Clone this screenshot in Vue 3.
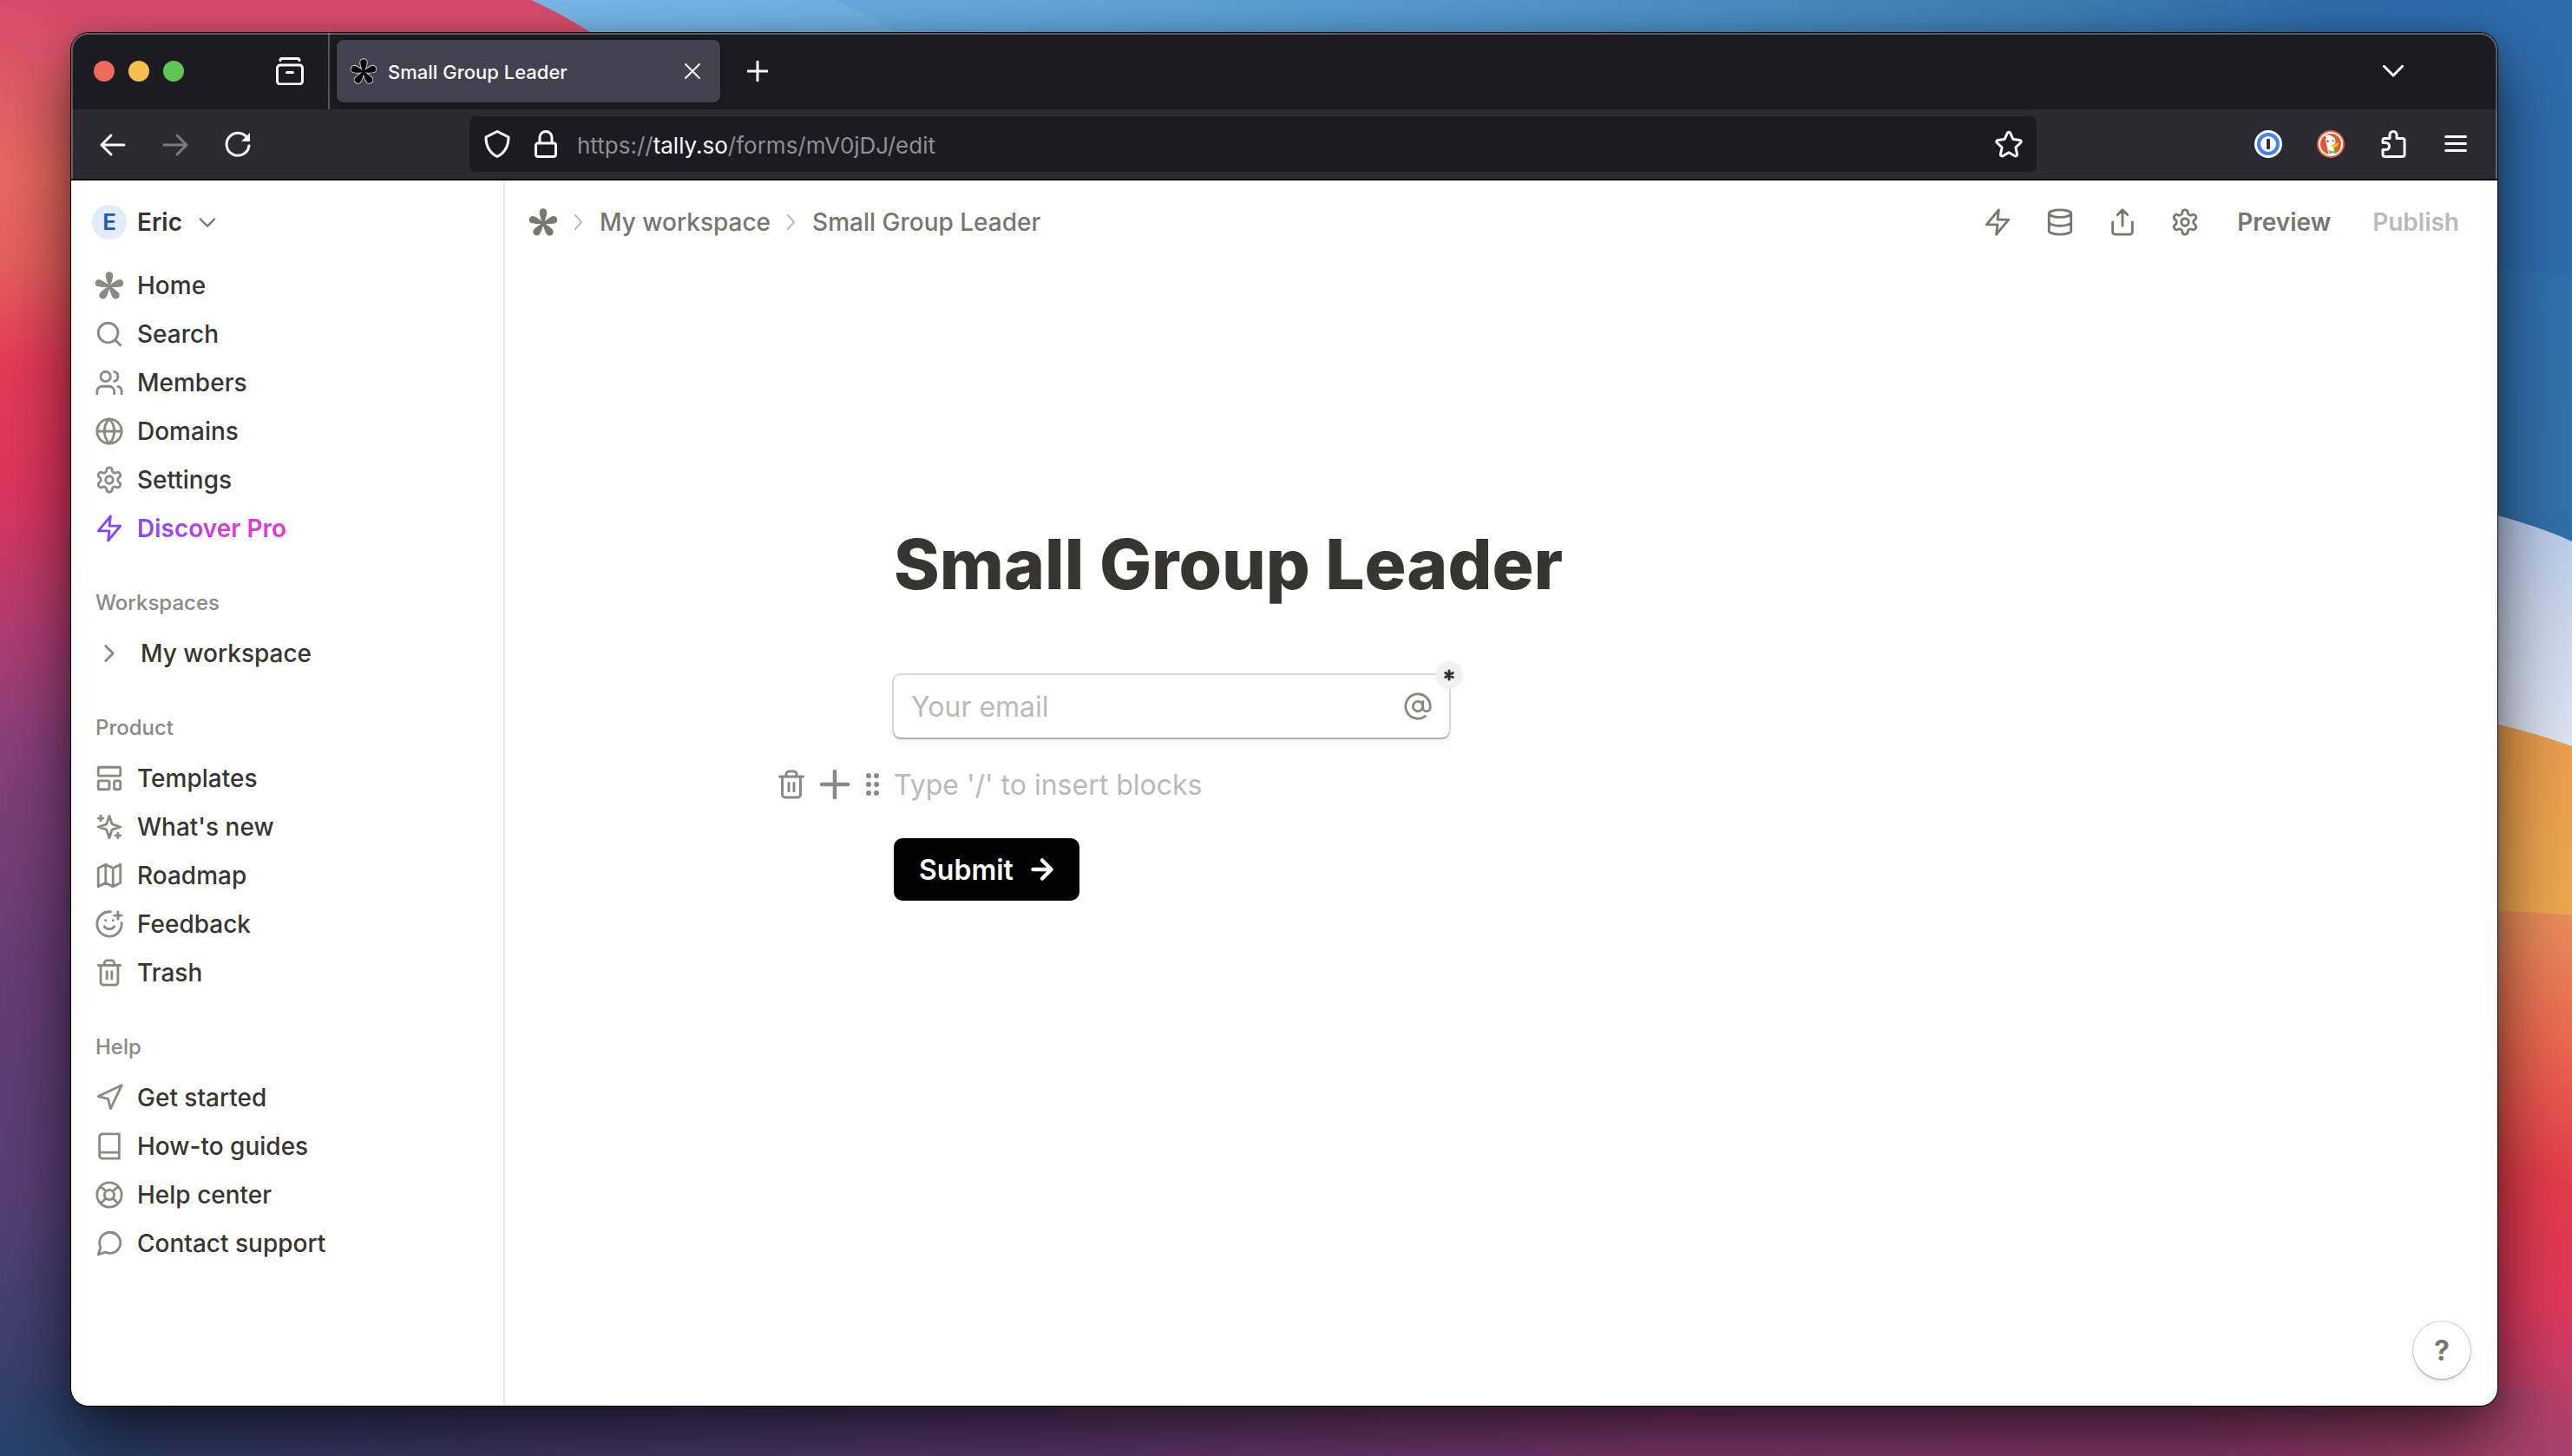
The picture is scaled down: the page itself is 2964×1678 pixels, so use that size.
<script setup>
import { ref } from 'vue'

const icons = {
  search: 'M19 11a8 8 0 1 1-16 0 8 8 0 0 1 16 0ZM21 21l-4.3-4.3',
  members: 'M16 21v-2a4 4 0 0 0-4-4H6a4 4 0 0 0-4 4v2M13 7a4 4 0 1 1-8 0 4 4 0 0 1 8 0ZM22 21v-2a4 4 0 0 0-3-3.87M16 3.13a4 4 0 0 1 0 7.75',
  globe: 'M22 12a10 10 0 1 1-20 0 10 10 0 0 1 20 0ZM12 2a14.5 14.5 0 0 0 0 20 14.5 14.5 0 0 0 0-20M2 12h20',
  settings: 'M12.22 2h-.44a2 2 0 0 0-2 2v.18a2 2 0 0 1-1 1.73l-.43.25a2 2 0 0 1-2 0l-.15-.08a2 2 0 0 0-2.73.73l-.22.38a2 2 0 0 0 .73 2.73l.15.1a2 2 0 0 1 1 1.72v.51a2 2 0 0 1-1 1.74l-.15.09a2 2 0 0 0-.73 2.73l.22.38a2 2 0 0 0 2.73.73l.15-.08a2 2 0 0 1 2 0l.43.25a2 2 0 0 1 1 1.73V20a2 2 0 0 0 2 2h.44a2 2 0 0 0 2-2v-.18a2 2 0 0 1 1-1.73l.43-.25a2 2 0 0 1 2 0l.15.08a2 2 0 0 0 2.73-.73l.22-.39a2 2 0 0 0-.73-2.73l-.15-.08a2 2 0 0 1-1-1.74v-.5a2 2 0 0 1 1-1.74l.15-.09a2 2 0 0 0 .73-2.73l-.22-.38a2 2 0 0 0-2.73-.73l-.15.08a2 2 0 0 1-2 0l-.43-.25a2 2 0 0 1-1-1.73V4a2 2 0 0 0-2-2ZM15 12a3 3 0 1 1-6 0 3 3 0 0 1 6 0Z',
  bolt: 'M13 2 3 14h9l-1 8 10-12h-9l1-8Z',
  right: 'M9 18l6-6-6-6',
  down: 'M5 9l7 7 7-7',
  templates: 'M4 3h16a1 1 0 0 1 1 1v5a1 1 0 0 1-1 1H4a1 1 0 0 1-1-1V4a1 1 0 0 1 1-1ZM4 14h7a1 1 0 0 1 1 1v5a1 1 0 0 1-1 1H4a1 1 0 0 1-1-1v-5a1 1 0 0 1 1-1ZM17 14h3a1 1 0 0 1 1 1v5a1 1 0 0 1-1 1h-3a1 1 0 0 1-1-1v-5a1 1 0 0 1 1-1Z',
  sparkles: 'm12 3-1.912 5.813a2 2 0 0 1-1.275 1.275L3 12l5.813 1.912a2 2 0 0 1 1.275 1.275L12 21l1.912-5.813a2 2 0 0 1 1.275-1.275L21 12l-5.813-1.912a2 2 0 0 1-1.275-1.275L12 3ZM5 3v4M3 5h4M19 17v4M17 19h4',
  map: 'M3 6l6-3 6 3 6-3v15l-6 3-6-3-6 3ZM9 3v15M15 6v15',
  feedback: 'M22 11v1a10 10 0 1 1-9-10M8 14s1.5 2 4 2 4-2 4-2M9 9h.01M15 9h.01M16 5h6M19 2v6',
  trash: 'M3 6h18M19 6v14c0 1-1 2-2 2H7c-1 0-2-1-2-2V6M8 6V4c0-1 1-2 2-2h4c1 0 2 1 2 2v2M10 11v6M14 11v6',
  send: 'M3 11l19-9-9 19-2-8-8-2Z',
  book: 'M4 19.5v-15A2.5 2.5 0 0 1 6.5 2H20v20H6.5A2.5 2.5 0 0 1 4 19.5ZM4 17h16',
  lifebuoy: 'M22 12a10 10 0 1 1-20 0 10 10 0 0 1 20 0ZM16 12a4 4 0 1 1-8 0 4 4 0 0 1 8 0ZM4.93 4.93l4.24 4.24M14.83 9.17l4.24-4.24M14.83 14.83l4.24 4.24M9.17 14.83l-4.24 4.24',
  message: 'M21 11.5a8.38 8.38 0 0 1-.9 3.8 8.5 8.5 0 0 1-7.6 4.7 8.38 8.38 0 0 1-3.8-.9L3 21l1.9-5.7a8.38 8.38 0 0 1-.9-3.8 8.5 8.5 0 0 1 4.7-7.6 8.38 8.38 0 0 1 3.8-.9h.5a8.48 8.48 0 0 1 8 8v.5Z',
  database: 'M21 5c0 1.66-4 3-9 3S3 6.66 3 5s4-3 9-3 9 1.34 9 3ZM3 5v14a9 3 0 0 0 18 0V5M3 12a9 3 0 0 0 18 0',
  share: 'M4 12v8a2 2 0 0 0 2 2h12a2 2 0 0 0 2-2v-8M16 6l-4-4-4 4M12 2v13',
  at: 'M16 12a4 4 0 1 1-8 0 4 4 0 0 1 8 0ZM16 8v5a3 3 0 0 0 6 0v-1a10 10 0 1 0-4 8',
  plus: 'M12 2v20M2 12h20',
  arrow: 'M5 12h14M12 5l7 7-7 7',
}

const sections = [
  {
    items: [
      { label: 'Home', icon: 'tally' },
      { label: 'Search', icon: 'search' },
      { label: 'Members', icon: 'members' },
      { label: 'Domains', icon: 'globe' },
      { label: 'Settings', icon: 'settings' },
      { label: 'Discover Pro', icon: 'bolt', pro: true },
    ],
  },
  { title: 'Workspaces', items: [{ label: 'My workspace', icon: 'right', folder: true }] },
  {
    title: 'Product',
    items: [
      { label: 'Templates', icon: 'templates' },
      { label: "What's new", icon: 'sparkles' },
      { label: 'Roadmap', icon: 'map' },
      { label: 'Feedback', icon: 'feedback' },
      { label: 'Trash', icon: 'trash' },
    ],
  },
  {
    title: 'Help',
    items: [
      { label: 'Get started', icon: 'send' },
      { label: 'How-to guides', icon: 'book' },
      { label: 'Help center', icon: 'lifebuoy' },
      { label: 'Contact support', icon: 'message' },
    ],
  },
]

const actions = [
  { label: 'Integrations', icon: 'bolt' },
  { label: 'Submissions', icon: 'database' },
  { label: 'Share', icon: 'share' },
  { label: 'Form settings', icon: 'settings' },
]

const email = ref('')
const block = ref('')
</script>

<template>
  <div class="desktop">
    <svg class="wallpaper" viewBox="0 0 2964 1678" preserveAspectRatio="none" aria-hidden="true">
      <defs>
        <linearGradient id="wp-left" x1="0" y1="0" x2="0" y2="1">
          <stop offset="0" stop-color="#d9496c" />
          <stop offset=".06" stop-color="#df5c66" />
          <stop offset=".12" stop-color="#e7695e" />
          <stop offset=".18" stop-color="#e5605c" />
          <stop offset=".25" stop-color="#e63a58" />
          <stop offset=".34" stop-color="#dc355c" />
          <stop offset=".42" stop-color="#b73c70" />
          <stop offset=".52" stop-color="#84407a" />
          <stop offset=".66" stop-color="#683d76" />
          <stop offset=".84" stop-color="#523f74" />
          <stop offset="1" stop-color="#27416c" />
        </linearGradient>
        <linearGradient id="wp-sky" x1="0" y1="0" x2="1" y2="0">
          <stop offset="0" stop-color="#78b8e8" />
          <stop offset=".16" stop-color="#6fb1e2" />
          <stop offset=".4" stop-color="#5197cf" />
          <stop offset=".75" stop-color="#3d7db5" />
          <stop offset=".88" stop-color="#2f6bac" />
          <stop offset="1" stop-color="#2e6cad" />
        </linearGradient>
        <linearGradient id="wp-cloud" x1="0" y1="0" x2="1" y2="0">
          <stop offset="0" stop-color="#5fa6dc" stop-opacity=".6" />
          <stop offset="1" stop-color="#5fa6dc" stop-opacity="0" />
        </linearGradient>
        <linearGradient id="wp-blue" x1="0" y1="0" x2="0" y2="1">
          <stop offset="0" stop-color="#3070ad" />
          <stop offset=".7" stop-color="#3271ab" />
          <stop offset="1" stop-color="#2d69a8" />
        </linearGradient>
        <linearGradient id="wp-ice" x1="0" y1="0" x2="0" y2="1">
          <stop offset="0" stop-color="#b3c5ea" />
          <stop offset=".5" stop-color="#cbd8ea" />
          <stop offset="1" stop-color="#e0e6f2" />
        </linearGradient>
        <linearGradient id="wp-amber" x1="0" y1="0" x2="0" y2="1">
          <stop offset="0" stop-color="#e9994c" />
          <stop offset="1" stop-color="#edaa50" />
        </linearGradient>
        <linearGradient id="wp-red" x1="0" y1="0" x2="0" y2="1">
          <stop offset="0" stop-color="#e88f5c" />
          <stop offset=".25" stop-color="#e9674e" />
          <stop offset=".5" stop-color="#e43b4a" />
          <stop offset=".72" stop-color="#df385a" />
          <stop offset="1" stop-color="#a3426e" />
        </linearGradient>
        <linearGradient id="wp-floor" x1="0" y1="0" x2="1" y2="0">
          <stop offset="0" stop-color="#27416c" stop-opacity="0" />
          <stop offset=".04" stop-color="#2b406c" />
          <stop offset=".18" stop-color="#40396a" />
          <stop offset=".4" stop-color="#5a3a70" />
          <stop offset=".65" stop-color="#853a70" />
          <stop offset=".85" stop-color="#8a3a6a" />
          <stop offset=".97" stop-color="#a5426c" />
          <stop offset="1" stop-color="#a5426c" stop-opacity="0" />
        </linearGradient>
      </defs>
      <path d="M0 0h2964v1678H0Z" fill="url(#wp-left)" />
      <path d="M612 0C660 22 700 48 740 80L1200 900H2964V0Z" fill="url(#wp-sky)" />
      <path d="M960 0C1010 20 1040 40 1100 80H2300V0Z" fill="url(#wp-cloud)" />
      <path d="M2700 294C2800 300 2900 308 2964 320V700H2700Z" fill="url(#wp-blue)" />
      <path d="M2700 560C2800 576 2890 590 2964 624V900H2700Z" fill="url(#wp-ice)" />
      <path d="M2700 800C2800 818 2880 830 2964 860V1100H2700Z" fill="url(#wp-amber)" />
      <path d="M2700 1046C2800 1046 2880 1048 2964 1055V1678H2700Z" fill="url(#wp-red)" />
      <path d="M0 1600H2964V1678H0Z" fill="url(#wp-floor)" />
    </svg>

    <!-- Shared brand mark -->
    <svg class="sprite" aria-hidden="true">
      <symbol id="tally-mark" viewBox="0 0 24 24" overflow="visible">
        <path
          v-for="n in 5"
          :key="n"
          :transform="`rotate(${n * 72} 12 12.8)`"
          d="M12 14.4C10.8 11 9 6.600 9 3.900A3 3 0 0 1 15 3.900C15 6.600 13.200 11 12 14.400Z"
        />
      </symbol>
    </svg>

    <div class="window">
      <header class="chrome">
        <div class="titlebar">
          <div class="lights">
            <button class="light red" aria-label="Close window"></button>
            <button class="light yellow" aria-label="Minimize window"></button>
            <button class="light green" aria-label="Zoom window"></button>
          </div>
          <button class="view-btn" aria-label="Firefox View">
            <svg viewBox="0 0 32 32"><path d="M5 3.500a2 2 0 0 1 2-2h18a2 2 0 0 1 2 2M5 9h22a3.500 3.500 0 0 1 3.500 3.500v15A3.500 3.500 0 0 1 27 31H5a3.500 3.500 0 0 1-3.500-3.500v-15A3.500 3.500 0 0 1 5 9ZM12.500 17.500h7" /></svg>
          </button>
          <div class="tab">
            <svg class="favicon"><use href="#tally-mark" class="favicon-halo" /><use href="#tally-mark" class="favicon-ink" /></svg>
            <span class="tab-title">Small Group Leader</span>
            <button class="tab-close" aria-label="Close tab">
              <svg viewBox="0 0 18 18"><path d="M1 1l16 16M17 1L1 17" /></svg>
            </button>
          </div>
          <button class="tab-new" aria-label="New tab">
            <svg viewBox="0 0 24 24"><path d="M12 0v24M0 12h24" /></svg>
          </button>
          <button class="tab-list" aria-label="List all tabs">
            <svg viewBox="0 0 24 14"><path d="M1 1l11 11L23 1" /></svg>
          </button>
        </div>

        <div class="toolbar">
          <button class="tool" aria-label="Back">
            <svg viewBox="0 0 32 32"><path d="M29 17H3M14 6L3 17l11 11" /></svg>
          </button>
          <button class="tool faded" aria-label="Forward">
            <svg viewBox="0 0 32 32"><path d="M3 17h26M18 6l11 11-11 11" /></svg>
          </button>
          <button class="tool" aria-label="Reload">
            <svg viewBox="0 0 32 32"><path d="M28 11A13 13 0 1 0 29 18" /><path class="solid" d="M30 3v10H20Z" /></svg>
          </button>
          <div class="urlbar">
            <svg class="url-icon" viewBox="0 0 32 32"><path d="M16 1.500l13 6.500c0 10-4 18-13 22.500C7 26 3 18 3 8Z" /></svg>
            <svg class="url-icon" viewBox="0 0 32 32"><path d="M9 14V8.500a7 7 0 0 1 14 0V14M7 15h18a2.500 2.500 0 0 1 2.500 2.500v10.500a2.500 2.500 0 0 1-2.500 2.500H7A2.500 2.500 0 0 1 4.500 28V17.500A2.500 2.500 0 0 1 7 15Z" /></svg>
            <div class="address" role="textbox" aria-label="Address">https://<b>tally.so</b>/forms/mV0jDJ/edit</div>
            <button class="star" aria-label="Bookmark this page">
              <svg viewBox="0 0 32 32"><path d="M14.400 3.200a1.800 1.800 0 0 1 3.200 0l3.300 7.300 7.700.9a1.800 1.800 0 0 1 1 3.100l-5.700 5.300 1.600 8a1.800 1.800 0 0 1-2.600 1.900L16 25.700l-6.900 4a1.800 1.800 0 0 1-2.600-1.900l1.600-8-5.700-5.300a1.800 1.800 0 0 1 1-3.100l7.700-.9Z" /></svg>
            </button>
          </div>
          <button class="tool" aria-label="1Password">
            <svg viewBox="0 0 32 32">
              <g stroke="none">
                <circle cx="16" cy="16" r="16" fill="#fff" />
                <circle cx="16" cy="16" r="13" fill="#3b82f6" />
                <circle cx="16" cy="16" r="9" fill="#fff" />
                <rect x="14" y="10" width="4" height="12" rx="1" fill="#333" />
              </g>
            </svg>
          </button>
          <button class="tool" aria-label="DuckDuckGo">
            <svg viewBox="0 0 32 32">
              <g stroke="none">
                <circle cx="16" cy="16" r="16" fill="#de5833" />
                <circle cx="16" cy="16" r="14" fill="#fff" />
                <circle cx="16" cy="16" r="12" fill="#de5833" />
                <path d="M9 6.500c3-2 7-1 9 1 3 1 3.500 4 3.500 6.500L19 17l.5 4 2 6.500a12 12 0 0 1-8 .3L10.500 14C9.500 11 10 9.500 11 8.500Z" fill="#fff" />
                <circle cx="12.5" cy="12.8" r="1.2" fill="#2d4f8e" />
                <circle cx="18.5" cy="12.3" r="1" fill="#2d4f8e" />
                <path d="M17 17c2-2 5-1.500 8.500-2-1 2.500-3 2.500-4.500 3 1.500.5 3 0 3.500.5-1.500 1.500-5 2-7.500.8Z" fill="#fdd20a" />
                <path d="M13.500 23l4 1.500 4-1.500v4l-4-1-3.500 1.500Z" fill="#65bc46" />
              </g>
            </svg>
          </button>
          <button class="tool" aria-label="Extensions">
            <svg viewBox="0 0 32 32"><path d="M5.500 9.500H12V5.500a4 4 0 0 1 8 0v4h6.500A2.500 2.500 0 0 1 29 12v16a2.500 2.500 0 0 1-2.500 2.500h-20A2.500 2.500 0 0 1 4 28v-5.500h3.500a4 4 0 0 0 0-8H4V11a1.500 1.500 0 0 1 1.500-1.500Z" /></svg>
          </button>
          <button class="tool" aria-label="Application menu">
            <svg viewBox="0 0 32 32"><path d="M4.500 7.500h23M4.500 15.500h23M4.500 23.500h23" /></svg>
          </button>
        </div>
      </header>

      <div class="page">
        <aside class="sidebar">
          <button class="account">
            <span class="avatar">E</span>
            <span>Eric</span>
            <svg viewBox="0 0 24 24" class="account-caret"><path :d="icons.down" /></svg>
          </button>

          <nav v-for="(section, i) in sections" :key="i" class="section" :aria-label="section.title || 'Main'">
            <h2 v-if="section.title" class="section-title">{{ section.title }}</h2>
            <a
              v-for="item in section.items"
              :key="item.label"
              href="#"
              class="item"
              :class="{ pro: item.pro, folder: item.folder }"
            >
              <svg v-if="item.icon === 'tally'" class="icon mark"><use href="#tally-mark" /></svg>
              <svg v-else class="icon" viewBox="0 0 24 24"><path :d="icons[item.icon]" /></svg>
              <span class="item-label">{{ item.label }}</span>
            </a>
          </nav>
        </aside>

        <main class="main">
          <div class="topbar">
            <nav class="crumbs" aria-label="Breadcrumb">
              <a href="#" aria-label="Home" class="crumb-home"><svg class="icon mark"><use href="#tally-mark" /></svg></a>
              <svg class="crumb-sep" viewBox="0 0 10 18"><path d="M1 1l7 8-7 8" /></svg>
              <a href="#">My workspace</a>
              <svg class="crumb-sep" viewBox="0 0 10 18"><path d="M1 1l7 8-7 8" /></svg>
              <a href="#">Small Group Leader</a>
            </nav>
            <div class="actions">
              <button v-for="action in actions" :key="action.label" class="action" :aria-label="action.label">
                <svg class="icon" viewBox="0 0 24 24"><path :d="icons[action.icon]" /></svg>
              </button>
              <button class="text-btn">Preview</button>
              <button class="text-btn muted">Publish</button>
            </div>
          </div>

          <form class="editor" @submit.prevent>
            <h1>Small Group Leader</h1>
            <div class="field">
              <input v-model="email" type="email" placeholder="Your email" aria-label="Your email" />
              <svg class="icon" viewBox="0 0 24 24"><path :d="icons.at" /></svg>
              <span class="required" aria-label="Required">
                <svg viewBox="0 0 14 14"><path d="M7 2v10M2.700 4.500l8.600 5M11.300 4.500L2.700 9.500" /></svg>
              </span>
            </div>
            <div class="block-row">
              <button type="button" class="block-tool" aria-label="Delete block">
                <svg class="icon" viewBox="0 0 24 24"><path :d="icons.trash" /></svg>
              </button>
              <button type="button" class="block-tool add" aria-label="Add block">
                <svg class="icon" viewBox="0 0 24 24"><path :d="icons.plus" /></svg>
              </button>
              <button type="button" class="block-tool grip" aria-label="Drag block">
                <svg viewBox="0 0 16 28">
                  <template v-for="y in [4, 14, 24]" :key="y">
                    <circle cx="3" :cy="y" r="3" />
                    <circle cx="12" :cy="y" r="3" />
                  </template>
                </svg>
              </button>
              <input v-model="block" type="text" placeholder="Type '/' to insert blocks" aria-label="New block" />
            </div>
            <button type="submit" class="submit">
              Submit
              <svg viewBox="0 0 24 24"><path :d="icons.arrow" /></svg>
            </button>
          </form>

          <button class="help" aria-label="Help">?</button>
        </main>
      </div>
    </div>
  </div>
</template>

<style>
html,
body {
  margin: 0;
}
</style>

<style scoped>
* {
  box-sizing: border-box;
}
.desktop {
  position: relative;
  display: flex;
  min-height: 100vh;
  padding: 38px 86px 58px 82px;
  overflow: hidden;
  font-family: Inter, 'Liberation Sans', sans-serif;
  color: #37352f;
}
button,
input {
  margin: 0;
  padding: 0;
  border: 0;
  background: none;
  color: inherit;
  font: inherit;
  outline: 0;
}
a {
  color: inherit;
  text-decoration: none;
}
svg {
  display: block;
  flex: none;
  fill: none;
  stroke: currentColor;
  stroke-linecap: round;
  stroke-linejoin: round;
}
.wallpaper {
  position: absolute;
  inset: 0;
  width: 100%;
  height: 100%;
  stroke: none;
}
.sprite {
  position: absolute;
  width: 0;
  height: 0;
}
.window {
  position: relative;
  flex: 1;
  display: flex;
  flex-direction: column;
  border-radius: 20px;
  overflow: hidden;
  background: #fff;
  box-shadow: 0 0 0 1px #000, 0 0 20px rgba(0, 0, 0, 0.15), 0 36px 80px rgba(0, 0, 0, 0.65);
}

/* Browser chrome */
.chrome {
  position: relative;
  color: #fbfbfe;
  background: #1c1b22;
  border-bottom: 2px solid #0c0c0d;
}
.chrome::after {
  content: '';
  position: absolute;
  inset: 0;
  border: 2px solid rgba(255, 255, 255, 0.28);
  border-bottom: 0;
  border-radius: 20px 20px 0 0;
  pointer-events: none;
}
.titlebar {
  display: flex;
  align-items: center;
  height: 88px;
  padding: 0 108px 0 26px;
}
.lights {
  display: flex;
  gap: 16px;
}
.light {
  width: 24px;
  height: 24px;
  border-radius: 50%;
}
.red {
  background: #ed6a5e;
}
.yellow {
  background: #f5bf4f;
}
.green {
  background: #61c554;
}
.view-btn {
  display: flex;
  align-items: center;
  height: 100%;
  padding: 0 28px 0 106px;
  border-right: 2px solid #55545b;
}
.view-btn svg {
  width: 32px;
  height: 32px;
  stroke-width: 3;
}
.tab {
  display: flex;
  align-items: center;
  width: 442px;
  height: 72px;
  margin-left: 8px;
  padding: 0 23px 0 16px;
  border-radius: 8px;
  background: #42414d;
  box-shadow: 0 0 6px rgba(0, 0, 0, 0.5);
}
.favicon {
  width: 30px;
  height: 30px;
  overflow: visible;
}
.favicon-halo {
  fill: #d8d8dc;
  stroke: #d8d8dc;
  stroke-width: 1.5;
}
.favicon-ink {
  fill: #000;
  stroke: none;
}
.tab-title {
  flex: 1;
  margin-left: 13px;
  padding-top: 2px;
  font-size: 22px;
  font-weight: 500;
}
.tab-close svg {
  width: 18px;
  height: 18px;
  stroke-width: 2;
}
.tab-new {
  margin-left: 31px;
}
.tab-new svg {
  width: 24px;
  height: 24px;
  stroke-width: 3;
}
.tab-list {
  margin-left: auto;
}
.tab-list svg {
  width: 24px;
  height: 14px;
  stroke-width: 3;
}
.toolbar {
  display: flex;
  align-items: center;
  height: 80px;
  padding: 0 12px;
  background: #2b2a33;
}
.tool {
  display: flex;
  justify-content: center;
  width: 72px;
}
.tool svg,
.star svg,
.url-icon {
  width: 32px;
  height: 32px;
  stroke-width: 3;
}
.faded {
  color: #7b7a80;
}
.solid {
  fill: currentColor;
  stroke: none;
}
.urlbar {
  flex: 1;
  display: flex;
  align-items: center;
  gap: 24px;
  height: 64px;
  margin: 0 231px;
  padding: 0 16px;
  border-radius: 8px;
  background: #1c1b22;
}
.address {
  flex: 1;
  margin-left: -4px;
  padding-top: 2px;
  font-size: 26px;
  color: #8f8f94;
}
.address b {
  font-weight: 400;
  color: #fbfbfe;
}

/* Sidebar */
.page {
  flex: 1;
  display: flex;
}
.sidebar {
  flex: none;
  width: 500px;
  padding-top: 20px;
  border-right: 2px solid #ebebea;
  font-size: 28px;
}
.account {
  display: flex;
  align-items: center;
  height: 56px;
  margin-bottom: 17px;
  padding-left: 24px;
  font-weight: 600;
}
.avatar {
  width: 40px;
  margin-right: 12px;
  border-radius: 50%;
  background: #e1edff;
  color: #1f56c0;
  font-size: 26px;
  line-height: 40px;
  text-align: center;
}
.account-caret {
  width: 28px;
  height: 28px;
  margin-left: 15px;
  stroke: #777670;
  stroke-width: 2;
}
.icon {
  width: 34px;
  height: 34px;
  stroke-width: 2;
}
.mark {
  width: 34px;
  height: 34px;
  fill: currentColor;
  stroke: none;
}
.section-title {
  margin: 28px 0 0;
  padding-left: 28px;
  color: #8a8984;
  font-size: 24px;
  font-weight: 500;
  line-height: 60px;
}
.item {
  display: flex;
  align-items: center;
  gap: 15px;
  height: 56px;
  padding-left: 27px;
  font-weight: 500;
}
.item .icon {
  color: #8a8984;
}
.folder {
  gap: 19px;
}
.pro {
  font-weight: 600;
}
.pro .icon {
  color: #8248ff;
}
.pro .item-label {
  background: linear-gradient(90deg, #8248ff, #e735d7 65%);
  background-clip: text;
  color: transparent;
}

/* Form editor */
.main {
  position: relative;
  flex: 1;
  min-width: 0;
}
.topbar {
  display: flex;
  align-items: center;
  justify-content: space-between;
  height: 96px;
  padding: 0 20px 0 27px;
  color: #777670;
  font-size: 28px;
  font-weight: 500;
}
.crumbs,
.actions {
  display: flex;
  align-items: center;
}
.crumb-sep {
  width: 48px;
  height: 18px;
  stroke: #bbbab8;
  stroke-width: 2;
}
.action {
  display: flex;
  justify-content: center;
  width: 72px;
}
.text-btn {
  padding: 0 24px;
  font-weight: 600;
}
.muted {
  color: #bbbab8;
}
.editor {
  max-width: 1400px;
  margin: 0 auto;
  padding-top: 298px;
  font-size: 32px;
}
h1 {
  margin: 0 0 80px;
  font-size: 80px;
  font-weight: 800;
  line-height: 96px;
}
.field {
  position: relative;
  display: flex;
  align-items: center;
  width: 640px;
  height: 72px;
  padding: 0 19px 0 20px;
  border-radius: 8px;
  box-shadow: 0 0 0 2px rgba(61, 59, 53, 0.18), 0 2px 1px rgba(61, 59, 53, 0.22), 0 4px 8px rgba(61, 59, 53, 0.08);
}
.field input,
.block-row input {
  flex: 1;
  min-width: 0;
  height: 48px;
}
input::placeholder {
  color: #bbbab8;
  opacity: 1;
}
.field .icon {
  color: #8a8984;
}
.required {
  position: absolute;
  top: -16px;
  right: -16px;
  display: flex;
  align-items: center;
  justify-content: center;
  width: 32px;
  height: 32px;
  border-radius: 50%;
  background: #f1f1f0;
}
.required svg {
  width: 14px;
  height: 14px;
  stroke-width: 3;
}
.block-row {
  display: flex;
  align-items: center;
  margin: 30px 0 38px -143px;
}
.block-tool {
  display: flex;
  justify-content: center;
  width: 50px;
  color: #8a8984;
}
.block-tool .icon {
  width: 36px;
  height: 36px;
}
.add .icon {
  stroke-width: 3;
}
.grip {
  width: 38px;
  margin-right: 5px;
}
.grip svg {
  width: 16px;
  height: 28px;
  fill: currentColor;
  stroke: none;
}
.submit {
  display: flex;
  align-items: center;
  gap: 15px;
  height: 72px;
  padding: 0 25px 0 29px;
  border-radius: 10px;
  background: #000;
  color: #fff;
  font-weight: 600;
}
.submit svg {
  width: 36px;
  height: 36px;
  stroke-width: 3;
}
.help {
  position: absolute;
  right: 31px;
  bottom: 31px;
  width: 66px;
  height: 66px;
  border-radius: 50%;
  background: #fff;
  box-shadow: 0 0 0 1px rgba(61, 59, 53, 0.2), 0 2px 2px rgba(61, 59, 53, 0.2), 0 4px 10px rgba(61, 59, 53, 0.08);
  color: #777670;
  font-size: 32px;
  font-weight: 700;
}
</style>
